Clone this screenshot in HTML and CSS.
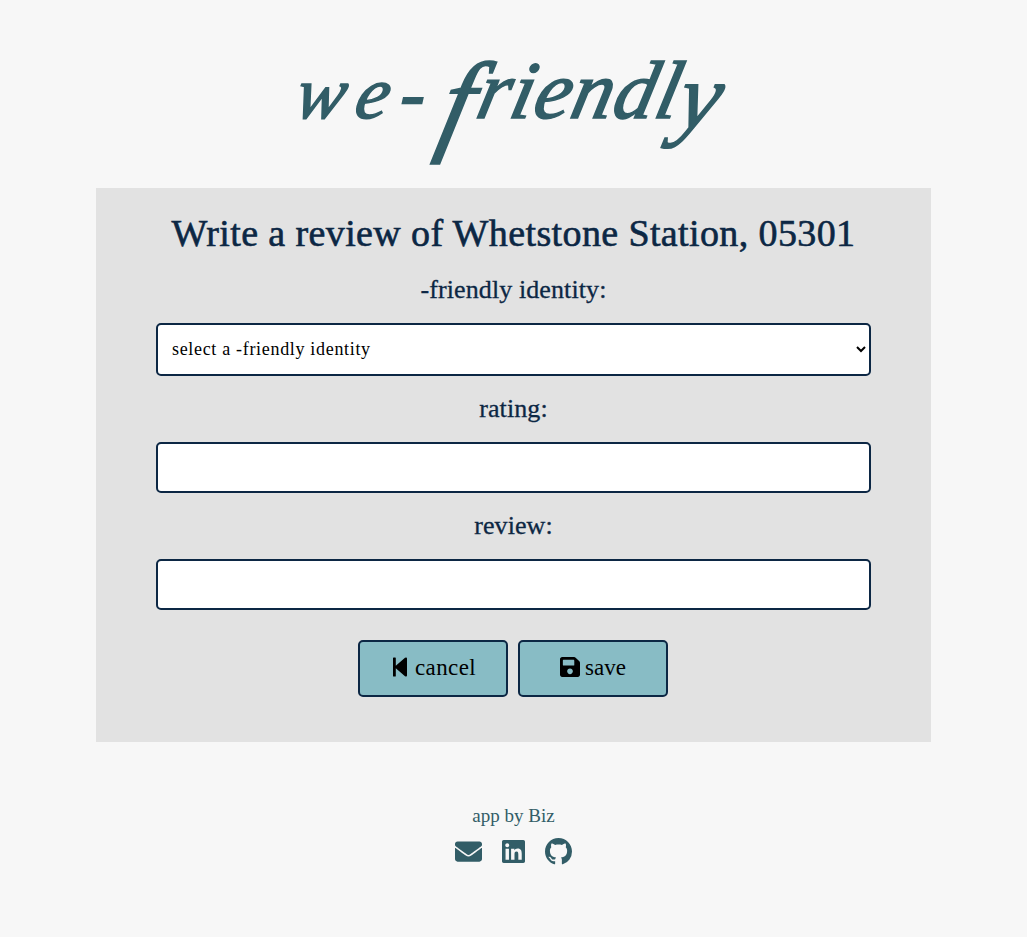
FILE: index.html
```html
<!DOCTYPE html>
<html lang="en">
<head>
<meta charset="utf-8">
<title>we-friendly</title>
<link rel="stylesheet" href="styles.css">
</head>
<body>
<header class="site-header"><h1 class="logo"><span class="logo-we">we-</span><span class="logo-f">f</span><span class="logo-middle">riendl</span><span class="logo-y">y</span></h1></header>
<main class="panel">
  <h2 class="title">Write a review of Whetstone Station, 05301</h2>
  <form class="review-form">
    <label class="label label-identity" for="identity">-friendly identity:</label>
    <select class="field select" id="identity"><option>select a -friendly identity</option></select>
    <label class="label label-rating" for="rating">rating:</label>
    <input class="field" id="rating" type="text">
    <label class="label label-review" for="review">review:</label>
    <input class="field" id="review" type="text">
    <div class="actions">
      <button class="button" type="button">
        <svg class="icon-back" viewBox="0 0 14 20" aria-hidden="true"><path d="M.7.5h1.500q.6 0 .6.6v7.600L12 .8Q14 0 14 1.500v17q0 1.500-2 .7L2.800 11.300v7.600q0 .6-.6.6H.7q-.7 0-.7-.6V1.100Q0 .5.7.5z"/></svg>
        <span class="text-cancel">cancel</span>
      </button>
      <button class="button" type="button">
        <svg class="icon-save" viewBox="0 32 448 448" aria-hidden="true"><path d="M433.941 129.941l-83.882-83.882A48 48 0 0 0 316.118 32H48C21.49 32 0 53.49 0 80v352c0 26.51 21.49 48 48 48h352c26.51 0 48-21.49 48-48V163.882a48 48 0 0 0-14.059-33.941zM224 416c-35.346 0-64-28.654-64-64 0-35.346 28.654-64 64-64s64 28.654 64 64c0 35.346-28.654 64-64 64zm96-304.52V212c0 6.627-5.373 12-12 12H76c-6.627 0-12-5.373-12-12V108c0-6.627 5.373-12 12-12h228.52c3.183 0 6.235 1.264 8.485 3.515l3.48 3.48A11.996 11.996 0 0 1 320 111.48z"/></svg>
        <span class="text-save">save</span>
      </button>
    </div>
  </form>
</main>
<footer class="footer">
  <p class="credit">app by Biz</p>
  <nav class="social">
    <svg class="icon-mail" viewBox="0 64 512 384" role="img" aria-label="Email"><path d="M502.3 190.8c3.9-3.1 9.7-.2 9.7 4.7V400c0 26.5-21.5 48-48 48H48c-26.500 0-48-21.500-48-48V195.600c0-5 5.700-7.800 9.700-4.700 22.400 17.400 52.100 39.500 154.100 113.600 21.100 15.400 56.700 47.800 92.200 47.600 35.700.3 72-32.800 92.300-47.600 102-74.100 131.600-96.300 154-113.700zM256 320c23.200.4 56.600-29.200 73.400-41.400 132.700-96.300 142.800-104.700 173.400-128.700 5.800-4.500 9.200-11.500 9.200-18.900v-19c0-26.500-21.500-48-48-48H48c-26.500 0-48 21.500-48 48v19c0 7.400 3.400 14.300 9.200 18.900 30.600 23.900 40.700 32.400 173.400 128.700 16.800 12.200 50.200 41.800 73.400 41.400z"/></svg>
    <svg class="icon-linkedin" viewBox="0 32 448 448" role="img" aria-label="LinkedIn"><path d="M416 32H31.900C14.300 32 0 46.500 0 64.300v383.400C0 465.500 14.300 480 31.900 480H416c17.600 0 32-14.500 32-32.300V64.300c0-17.800-14.400-32.300-32-32.300zM135.400 416H69V202.200h66.500V416zm-33.200-243c-21.300 0-38.500-17.300-38.500-38.500S80.900 96 102.200 96c21.200 0 38.500 17.300 38.500 38.500 0 21.300-17.200 38.500-38.500 38.500zm282.100 243h-66.400V312c0-24.800-.5-56.700-34.500-56.700-34.600 0-39.900 27-39.900 54.900V416h-66.400V202.200h63.700v29.200h.9c8.900-16.800 30.600-34.500 62.900-34.500 67.200 0 79.700 44.300 79.700 101.900V416z"/></svg>
    <svg class="icon-github" viewBox="0 0 16 16" role="img" aria-label="GitHub"><path d="M8 0C3.58 0 0 3.58 0 8c0 3.54 2.290 6.530 5.470 7.590.4.070.55-.17.55-.38 0-.19-.01-.82-.01-1.490-2.010.37-2.530-.49-2.690-.94-.09-.23-.48-.94-.82-1.130-.28-.15-.68-.52-.01-.53.630-.01 1.080.58 1.230.82.720 1.210 1.870.87 2.330.66.070-.52.28-.87.51-1.070-1.780-.2-3.640-.89-3.640-3.950 0-.87.31-1.590.82-2.150-.08-.2-.36-1.020.08-2.120 0 0 .67-.21 2.200.82.640-.18 1.320-.27 2-.27s1.360.09 2 .27c1.530-1.040 2.200-.82 2.200-.82.440 1.100.16 1.920.08 2.120.51.56.82 1.270.82 2.150 0 3.070-1.870 3.750-3.650 3.950.29.25.54.730.54 1.480 0 1.070-.01 1.930-.01 2.200 0 .21.15.46.55.38A8.01 8.01 0 0 0 16 8c0-4.420-3.580-8-8-8z"/></svg>
  </nav>
</footer>
</body>
</html>
```
FILE: styles.css
```css
* { box-sizing: border-box; }
body { margin: 0; background: #f7f7f7; color: #325d67; font-family: "Liberation Serif", serif; }
.site-header { height: 188px; padding: 41px 17px 0 0; display: flex; justify-content: center; }
.logo { margin: 0; font: italic 400 82px/100px "Liberation Serif", serif; -webkit-text-stroke: 1.6px #325d67; white-space: nowrap; transform: skewX(-13deg); transform-origin: 50% 77px; }
.logo-we { font-size: 74px; letter-spacing: 11px; margin-right: 8px; }
.logo-f { font-size: 112px; line-height: 0; vertical-align: -22px; margin-right: 3px; }
.logo-middle { letter-spacing: 1px; }
.logo-y { font-size: 94px; line-height: 0; vertical-align: -10px; }
.panel { width: 835px; height: 554px; margin: 0 auto; padding: 22px 60px 0; background: #e2e2e2; color: #0c2744; }
.title { margin: 0; height: 46px; font-size: 38px; line-height: 46px; font-weight: 400; letter-spacing: .38px; text-align: center; white-space: nowrap; -webkit-text-stroke: .6px #0c2744; }
.review-form { display: flex; flex-direction: column; align-items: center; }
.label { font-size: 26px; line-height: 32px; letter-spacing: .1px; -webkit-text-stroke: .3px #0c2744; }
.label-identity { margin: 18px 0 17px; }
.label-rating { margin: 17px 0 17px; }
.label-review { margin: 17px 0 17px; }
.field { width: 715px; height: 51px; margin: 0; border: 2px solid #0c2744; border-radius: 5px; background: #fff; color: #000; font: 18px "Liberation Serif", serif; padding: 10px; }
.select { height: 53px; padding-bottom: 12px; letter-spacing: .68px; }
.actions { display: flex; gap: 10px; margin: 30px 1px 0 0; }
.button { display: flex; align-items: center; justify-content: center; width: 150px; height: 57px; padding: 0 0 2px; border: 2px solid #0c2744; border-radius: 5px; background: #88bcc5; color: #000; font: 23px "Liberation Serif", serif; }
.icon-back { width: 14px; height: 20px; margin: 0 8px 2px 3px; }
.icon-save { width: 20px; height: 20px; margin: 0 5px 2px 0; }
.text-cancel { letter-spacing: .4px; }
.footer { display: flex; flex-direction: column; align-items: center; padding-top: 62px; }
.credit { margin: 0; font-size: 19px; line-height: 24px; }
.social { display: flex; align-items: center; gap: 20px; margin-top: 10px; fill: #325d67; }
.icon-mail { width: 27px; height: 21px; }
.icon-linkedin { width: 23px; height: 23px; }
.icon-github { width: 27px; height: 27px; }
```
